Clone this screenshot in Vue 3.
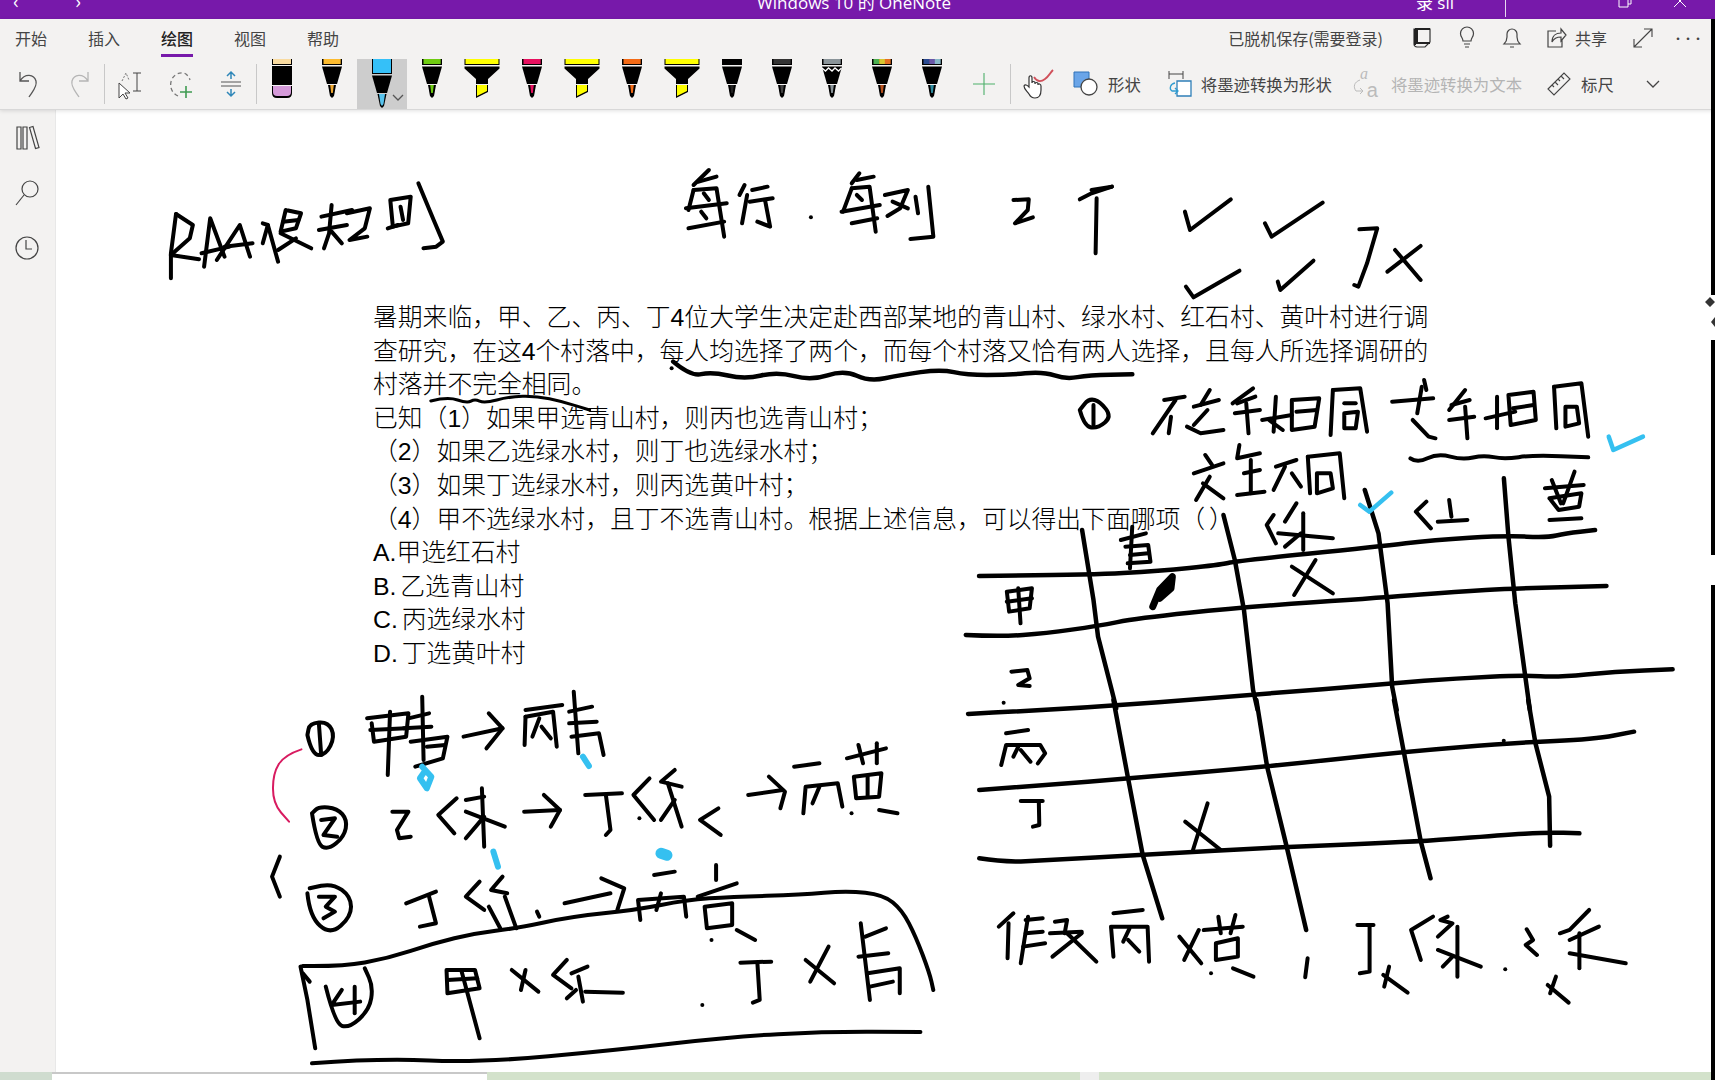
<template>
  <div class="window">
    <div class="titlebar">
      <div class="titlebar-inner">
        <span class="nav nav-back">‹</span>
        <span class="nav nav-forward">›</span>
        <span class="title">Windows 10 的 OneNote</span>
        <span class="account">录 sii</span>
        <span class="title-sep"></span>
        <svg class="win-btn restore" width="14" height="32" viewBox="0 0 14 32"><path d="M1 13h9v9H1zM4 13v-3h9v9h-3" fill="none" stroke="#fff" /></svg>
        <svg class="win-btn close" width="14" height="32" viewBox="0 0 14 32"><path d="M1 10l12 12M13 10L1 22" fill="none" stroke="#fff" /></svg>
      </div>
    </div>

    <header class="ribbon">
      <div class="tabs-row">
        <nav class="tabs">
          <span v-for="tab in tabs" :key="tab" :class="['tab', { active: tab === '绘图' }]">{{ tab }}</span>
        </nav>
        <div class="status">
          <span class="saved">已脱机保存(需要登录)</span>
          <svg class="st-icon" width="24" height="24" viewBox="0 0 24 24"><path d="M4 3h16v13l-5 5H7a3 3 0 0 1-3-3z" fill="none" stroke="#333" stroke-width="1.2" /><path d="M5 3v16M20 3H5M7 3v14h13" fill="none" stroke="#222" stroke-width="2" /></svg>
          <svg class="st-icon" width="24" height="24" viewBox="0 0 24 24"><path d="M8 15c0-3-2.500-4-2.500-7.500a6.500 6.500 0 0 1 13 0C18.500 11 16 12 16 15zM9 18h6M10 21h4" fill="none" stroke="#444" stroke-width="1.200" /></svg>
          <svg class="st-icon" width="24" height="24" viewBox="0 0 24 24"><path d="M4 18c2-2 3-3 3-7V8a5 5 0 0 1 10 0v3c0 4 1 5 3 7zM10 21h4" fill="none" stroke="#444" stroke-width="1.200" /></svg>
          <span class="share">
            <svg width="22" height="24" viewBox="0 0 22 24"><path d="M11 5H3v16h14v-7M7 16c0-6 4-9 9-9V3l5 6-5 6v-4c-4 0-7 1-9 5z" fill="none" stroke="#444" stroke-width="1.200" /></svg>
            共享
          </span>
          <svg class="st-icon expand" width="24" height="24" viewBox="0 0 24 24"><path d="M3 21L21 3M13 3h8v8M3 13v8h8" fill="none" stroke="#444" stroke-width="1.100" /></svg>
          <span class="more">•••</span>
        </div>
      </div>

      <div class="tools-row">
        <span class="tool tool-undo">
          <svg width="26" height="32" viewBox="0 0 26 32"><path d="M4 4v9h9M4 13c5-8 14-7 16 0 1.500 6-4 11-7 16" fill="none" stroke="#555" stroke-width="1.300" /></svg>
        </span>
        <span class="tool">
          <svg width="26" height="32" viewBox="0 0 26 32"><path d="M22 4v9h-9M22 13c-5-8-14-7-16 0-1.500 6 4 11 7 16" fill="none" stroke="#b5b5b5" stroke-width="1.300" /></svg>
        </span>
        <span class="divider"></span>
        <span class="tool tool-select">
          <svg width="30" height="32" viewBox="0 0 30 32"><path d="M4 15v15l4-4 3 5 2-1-3-5h5z" fill="#fff" stroke="#444" /><path d="M18 5h8M22 5v18M18 23h8" fill="none" stroke="#444" /><path d="M7 13l4-8 3 7" fill="none" stroke="#777" stroke-dasharray="2 1.500" /></svg>
        </span>
        <span class="tool">
          <svg width="30" height="32" viewBox="0 0 30 32"><path d="M12 28C5 25 3 17 6 11c2-4 7-7 12-6 3 1 5 4 6 7" fill="none" stroke="#777" stroke-width="1.300" stroke-dasharray="4 3" /><path d="M20 18v12M14 24h12" stroke="#3f9b52" stroke-width="1.600" /></svg>
        </span>
        <span class="tool tool-space">
          <svg width="26" height="32" viewBox="0 0 26 32"><path d="M3 14h20M3 18h20" stroke="#555" /><path d="M13 4v7M9 8l4-4 4 4M13 21v7M9 24l4 4 4-4" fill="none" stroke="#2e86b8" stroke-width="1.500" /></svg>
        </span>
        <span class="divider"></span>

        <span v-for="pen in pens" :key="pen.id" :class="['pen', { selected: pen.selected }]">
          <svg width="40" height="50" viewBox="-20 0 40 50">
            <template v-if="pen.kind === 'marker'">
              <rect x="-10" y="0" width="20" height="6" fill="#000" />
              <rect x="-9" y="0" width="18" height="5" :fill="pen.color" />
              <path d="M-10 7h20v19h-20z" fill="#000" />
              <path d="M-10 27h20v7q0 5-5 5h-10q-5 0-5-5z" fill="#000" />
              <path d="M-9 27h18v6q0 4-4 4h-10q-4 0-4-4z" :fill="pen.tip" />
            </template>
            <template v-else-if="pen.kind === 'wide'">
              <rect x="-17.500" y="0" width="35" height="6" fill="#000" />
              <rect x="-16.500" y="0" width="33" height="5" :fill="pen.color" />
              <path d="M-17.500 7.500h35v2L6 20v5H-6v-5L-17.500 9.500z" fill="#000" />
              <path d="M-6 26H6v7l-12 6z" fill="#000" />
              <path d="M-5 26H5v6l-10 5z" :fill="pen.color" />
            </template>
            <template v-else-if="pen.selected">
              <rect x="-10" y="0" width="20" height="15" fill="#000" />
              <rect x="-9" y="0" width="18" height="14" :fill="pen.color" />
              <path d="M-10 16.500H10L5 34H-5z" fill="#000" />
              <path d="M-4.500 35h9L2 47l-2 2-2-2z" fill="#000" />
              <path d="M-3 35H3L1.500 45 0 47l-1.500-2z" :fill="pen.tip" />
            </template>
            <template v-else>
              <rect x="-10" y="0" width="20" height="6" fill="#000" />
              <rect
                v-for="(band, i) in pen.bands"
                :key="i"
                :x="-8.500 + (17 * i) / pen.bands.length"
                y="0"
                :width="17 / pen.bands.length + 0.2"
                height="5"
                :fill="band"
              />
              <path d="M-10 7.500H10L5 25H-5z" fill="#000" />
              <path v-if="pen.zigzag" d="M-10 9l3.500 3 3-3 3.500 3 3-3 3.500 3 3-3" fill="none" stroke="#fff" stroke-width="1.300" />
              <path d="M-4 26H4l-2 11-2 2-2-2z" fill="#000" />
              <path d="M-1.800 26H1.800L.8 34H-.8z" :fill="pen.tip" />
            </template>
          </svg>
          <svg v-if="pen.selected" class="pen-caret" width="12" height="8" viewBox="0 0 12 8"><path d="M1 1l5 5 5-5" fill="none" stroke="#555" stroke-width="1.300" /></svg>
        </span>

        <span class="add-pen">
          <svg width="24" height="24" viewBox="0 0 24 24"><path d="M12 1v22M1 12h22" stroke="#4caf6a" stroke-width="1.100" /></svg>
        </span>
        <span class="divider"></span>

        <span class="tool tool-hand">
          <svg width="34" height="36" viewBox="0 0 34 36"><path d="M14 11c3 5 7 5 11 2s5-6 8-9" fill="none" stroke="#d0505a" stroke-width="1.800" /><path d="M9 28c-2-3-5-5-5-8 1-2 3-1 5 1V12c0-3 3-3 3 0v5c0-2 3-2 3 0v1c0-2 3-2 3 0v1c0-2 3-1 3 1v4c0 5-2 8-6 8s-5-2-6-4z" fill="#fff" stroke="#333" stroke-width="1.200" /></svg>
        </span>
        <span class="cmd shape-cmd">
          <svg width="26" height="26" viewBox="0 0 26 26"><path d="M1 1h15v15H1z" fill="#6aa5e8" stroke="#2f72b8" /><circle cx="16" cy="16" r="8" fill="#fff" stroke="#444" stroke-width="1.300" /></svg>
          形状
        </span>
        <span class="cmd convert-cmd">
          <svg width="26" height="28" viewBox="0 0 26 28"><path d="M2 1v8M2 4h14M16 1v8" fill="none" stroke="#444" /><path d="M10 11h14v15H10z" fill="#fff" stroke="#2f7fb8" stroke-width="1.300" /><path d="M8 13c-5 1-6 6-3 8h6M8 18l3 3-3 3" fill="none" stroke="#2f9bd0" stroke-width="1.300" /></svg>
          将墨迹转换为形状
        </span>
        <span class="cmd cmd-off text-cmd">
          <span class="aa">
            <i>a</i><b>a</b>
            <svg width="12" height="20" viewBox="0 0 12 20"><path d="M8 2C2 4 1 9 4 13h7M8 10l3 3-3 3" fill="none" stroke="#bbb" /></svg>
          </span>
          将墨迹转换为文本
        </span>
        <span class="cmd ruler-cmd">
          <svg width="26" height="26" viewBox="0 0 26 26"><path d="M2 18L18 2l6 6L8 24zM6 14l2 2M9 11l3 3M12 8l2 2M15 5l3 3" fill="none" stroke="#444" stroke-width="1.100" /></svg>
          标尺
        </span>
        <svg class="ribbon-chevron" width="14" height="10" viewBox="0 0 14 10"><path d="M1 2l6 6 6-6" fill="none" stroke="#444" stroke-width="1.300" /></svg>
      </div>
    </header>

    <main class="body">
      <aside class="sidebar">
        <svg width="26" height="28" viewBox="0 0 26 28"><path d="M3 3h4v22H3zM9 3h4v22H9zM15.500 3.500l3.500-1 6 21-3.500 1z" fill="none" stroke="#444" stroke-width="1.200" /></svg>
        <svg width="26" height="28" viewBox="0 0 26 28"><circle cx="16" cy="10" r="8" fill="none" stroke="#444" stroke-width="1.200" /><path d="M10 16L2 26" stroke="#444" stroke-width="1.200" /></svg>
        <svg width="26" height="28" viewBox="0 0 26 28"><circle cx="13" cy="14" r="11" fill="none" stroke="#444" stroke-width="1.200" /><path d="M12 6v9h6" fill="none" stroke="#444" stroke-width="1.200" /></svg>
      </aside>
      <section class="page">
        <p v-for="line in noteLines" :key="line" class="note-line">{{ line }}</p>
      </section>
    </main>

    <footer class="bottom-strip">
      <span class="strip-side"></span>
      <span class="strip-tab"></span>
      <span class="strip-green grow-a"></span>
      <span class="strip-gap"></span>
      <span class="strip-green grow-b"></span>
    </footer>

    <!-- handwritten ink sits over the page, on its own canvas -->
    <svg class="ink" width="1715" height="1080" viewBox="0 0 1715 1080">
      <g
        v-for="group in inkGroups"
        :key="group.id"
        :transform="`translate(${group.x} ${group.y}) scale(${group.sx} 0.3333)`"
        :stroke="group.color || '#000'"
        :stroke-width="group.width || 4"
        fill="none"
        stroke-linecap="round"
        stroke-linejoin="round"
      >
        <path v-for="(d, i) in group.paths" :key="i" :d="d" vector-effect="non-scaling-stroke" />
      </g>
      <path class="edge" d="M1713 19V295M1713 340V555M1713 585V1080" />
      <path d="M1705 302l5-5 5 5-5 5zM1711 322l4-5v10z" fill="#333" />
    </svg>
  </div>
</template>

<script setup>
const tabs = ['开始', '插入', '绘图', '视图', '帮助']

const pens = [
  { id: 1, kind: 'marker', color: '#f9dba0', tip: '#d59ad9' },
  { id: 2, kind: 'pen', bands: ['#fdbb2e'], tip: '#f0a830' },
  { id: 3, kind: 'pen', color: '#35c0f8', tip: '#58c4ee', selected: true },
  { id: 4, kind: 'pen', bands: ['#6ecb10'], tip: '#6ecb10' },
  { id: 5, kind: 'wide', color: '#ffff00' },
  { id: 6, kind: 'pen', bands: ['#e8105f'], tip: '#e8105f' },
  { id: 7, kind: 'wide', color: '#ffff00' },
  { id: 8, kind: 'pen', bands: ['#f46a15'], tip: '#f46a15' },
  { id: 9, kind: 'wide', color: '#ffff00' },
  { id: 10, kind: 'pen', bands: ['#000'], tip: '#222' },
  { id: 11, kind: 'pen', bands: ['#333'], tip: '#444' },
  { id: 12, kind: 'pen', bands: ['#8a9499'], tip: '#8a9499', zigzag: true },
  { id: 13, kind: 'pen', bands: ['#4caf50', '#d8c830', '#e67020'], tip: '#b8501c' },
  { id: 14, kind: 'pen', bands: ['#2a4a90', '#6a58a8', '#88b8c8'], tip: '#2e8ca0' },
]

const noteLines = [
  '暑期来临，甲、乙、丙、丁4位大学生决定赴西部某地的青山村、绿水村、红石村、黄叶村进行调',
  '查研究，在这4个村落中，每人均选择了两个，而每个村落又恰有两人选择，且每人所选择调研的',
  '村落并不完全相同。',
  '已知（1）如果甲选青山村，则丙也选青山村；',
  '（2）如果乙选绿水村，则丁也选绿水村；',
  '（3）如果丁选绿水村，则丙选黄叶村；',
  '（4）甲不选绿水村，且丁不选青山村。根据上述信息，可以得出下面哪项（ ）',
  'A.甲选红石村',
  'B. 乙选青山村',
  'C. 丙选绿水村',
  'D. 丁选黄叶村',
]

// "x,y x,y ..." to a stroke: short ones stay angular, long ones get smoothed
function stroke(points) {
  const pts = points.trim().split(/\s+/).map((p) => p.split(',').map(Number))
  if (pts.length === 1) return `M${pts[0]}L${pts[0]}`
  if (pts.length < 7) return 'M' + pts.join('L')
  let d = `M${pts[0]}`
  for (let i = 1; i < pts.length - 1; i++) {
    const mx = (pts[i][0] + pts[i + 1][0]) / 2
    const my = (pts[i][1] + pts[i + 1][1]) / 2
    d += `Q${pts[i]} ${mx},${my}`
  }
  return d + `L${pts[pts.length - 1]}`
}

function ink(id, x, y, sx, strokes, opts = {}) {
  return { id, x, y, sx, paths: strokes.map(stroke), ...opts }
}

const inkGroups = [
  // heading, top left
  ink('heading', 0, 110, 0.5102, [
    '345,312 335,430 335,505',
    '345,312 378,345 372,385 335,435 390,448',
    '400,470 412,325 440,440',
    '395,430 450,410',
    '425,450 470,345 490,440',
    '440,410 495,400',
    '525,345 545,455',
    '515,340 525,345 515,400',
    '560,300 590,310 580,355 550,365 560,300',
    '555,335 585,330',
    '550,370 610,415',
    '545,420 580,385',
    '630,320 690,300',
    '625,360 680,345',
    '650,285 645,370 635,415',
    '650,365 670,400',
    '680,310 725,295 715,355 685,390 720,380',
    '765,270 805,260 800,340 770,350 765,270',
    '785,290 790,330',
    '760,355 780,345',
    '820,220 850,330 868,395 855,410 830,415',
  ]),
  // top centre: 每行.每列 2个 and the ticks
  ink('count', 640, 140, 0.5102, [
    '135,90 105,135',
    '115,125 150,110',
    '105,150 95,210',
    '105,150 150,145 165,290',
    '90,205 170,190',
    '95,265 165,245',
    '125,160 135,180',
    '120,215 130,235',
    '205,135 195,165',
    '210,165 200,250',
    '220,150 250,140',
    '215,185 260,175',
    '245,180 255,260 230,245',
    '335,232',
    '430,100 415,130',
    '425,120 458,110',
    '415,145 398,215',
    '415,145 450,140 462,275',
    '395,215 470,195',
    '415,250 465,235',
    '425,165 435,180',
    '480,165 525,150 510,205 485,228',
    '495,185 525,205',
    '540,170 545,220',
    '565,140 575,290 530,297',
    '732,180 762,178 760,210 735,250 770,232',
    '925,140 885,160 862,178',
    '885,150 925,140',
    '895,175 893,340',
    '1068,215 1078,270 1158,178',
    '1225,250 1238,290 1338,188',
    '1070,440 1085,472 1175,392',
    '1250,425 1255,450 1320,362',
    '1410,268 1445,265 1425,370 1408,440 1400,435',
    '1465,395 1530,318',
    '1480,330 1530,420',
    '62,685',
  ]),
  ink('wave', 640, 140, 0.5102, [
    '65,665 100,710 140,695 205,718 270,695 335,722 400,690 450,725 510,705 590,688 640,705 720,705 790,695 835,718 880,705 965,703',
  ], { width: 4.500 }),
  ink('underline', 360, 295, 0.3827, [
    '185,318 230,305 280,325 300,312 325,325 390,305 460,303 530,320 600,345',
  ], { width: 3 }),
  // right: the three cases and table header
  ink('cases', 1000, 370, 0.456, [
    '175,120 185,170 215,175 245,140 220,95 195,85 175,120 175,120',
    '205,105 205,170',
    '360,90 405,80',
    '385,90 335,190',
    '375,140 370,190',
    '460,60 440,105',
    '425,110 480,90',
    '410,170 440,190 490,180',
    '455,120 425,165',
    '555,55 510,100',
    '520,100 560,80',
    '515,130 570,120',
    '540,100 545,190',
    '575,150 640,135',
    '605,80 600,185',
    '590,150 620,180',
    '640,90 700,85 690,170 640,180 640,90',
    '650,125 695,120',
    '730,60 725,195',
    '730,60 790,55 805,185',
    '755,100 780,100',
    '755,130 785,125 780,175 755,175 755,130',
    '930,30 935,60',
    '860,95 950,85',
    '925,50 915,130',
    '905,150 940,200 955,205',
    '1020,60 985,120',
    '990,105 1030,90',
    '985,150 1040,140',
    '1020,110 1025,205',
    '1065,145 1130,125',
    '1090,80 1090,175',
    '1115,75 1170,65 1175,150 1120,165 1115,75',
    '1125,115 1170,105',
    '1215,50 1220,175',
    '1215,50 1275,40 1290,200',
    '1240,110 1240,170 1270,160 1265,110 1240,110',
    '900,265 915,280 960,250 1015,270 1060,255 1105,268 1170,255 1290,262',
    '450,255 465,285',
    '425,310 490,280',
    '460,320 430,390',
    '445,340 490,385',
    '525,225 520,265 570,250',
    '535,310 570,300',
    '550,270 550,370',
    '520,375 580,365',
    '605,290 650,270',
    '625,290 600,360',
    '640,310 660,350',
    '675,260 680,370',
    '675,260 745,250 755,385',
    '695,310 695,370 730,355 725,310 695,310',
    // table headers and row labels
    '290,470 285,595',
    '265,510 320,490',
    '275,530 325,525 330,575 280,580',
    '285,555 325,550',
    '600,435 585,465 605,520',
    '650,400 625,455',
    '665,430 665,540',
    '610,490 730,505',
    '660,490 625,530',
    '935,395 912,425 945,475',
    '985,390 990,440',
    '960,455 1025,450',
    '1195,355 1280,345',
    '1210,330 1230,400',
    '1260,305 1235,400',
    '1205,385 1275,370 1270,410 1225,420 1205,385',
    '1205,450 1275,445',
    '15,665 70,655 65,715 20,725 15,665',
    '15,695 70,685',
    '40,655 45,760',
    '640,590 730,670',
    '692,570 645,675',
    '25,905 60,900 65,925 40,945 65,948',
    '8,998',
  ]),
  ink('smudge', 1000, 370, 0.456, ['335,710 350,660 378,620 375,655 350,685'], { width: 7 }),
  // table lines, upper part
  ink('table-top', 1000, 370, 0.456, [
    '180,480 205,690 215,800 245,960 255,1015',
    '490,435 515,570 535,720 555,960 565,1020',
    '800,360 830,490 850,700 860,950 870,1020',
    '1105,325 1115,500 1130,700 1150,900 1162,1020',
    '-46,618 190,615 350,603 480,585 520,573 830,530 950,510 1110,497 1200,503 1240,490 1305,480',
    '-75,795 0,800 100,790 215,768 300,745 530,712 845,682 1000,665 1130,655 1330,648',
    '-70,1032 140,1018 555,975 860,940 1000,925 1150,915 1220,922 1350,905 1475,898',
  ], { width: 4.500 }),
  ink('check-a', 1000, 370, 0.456, ['1335,200 1345,240 1410,200', '790,405 810,425 858,368'], { color: '#35c0f0', width: 4.500 }),
  // table lines, lower part and the hypothesis below
  ink('table-low', 950, 700, 0.4879, [
    '335,0 365,235 395,465 435,655',
    '628,0 650,200 690,440 730,690',
    '910,0 930,155 965,425 985,535',
    '1185,0 1200,130 1228,290 1230,437',
    '60,270 200,255 365,235 650,200 930,155 1160,128 1320,118 1402,95',
    '60,475 110,487 200,480 395,465 690,440 965,425 1130,405 1225,397 1290,400',
  ], { width: 4.500 }),
  ink('hypothesis', 950, 700, 0.4879, [
    '115,100 160,90',
    '105,195 115,135 185,135 195,160 180,190',
    '140,140 130,170',
    '145,150 165,185',
    '145,303 190,303',
    '182,303 183,375 170,380',
    '528,310 498,450',
    '482,365 555,450',
    '1135,122',
    '130,640 100,680',
    '120,670 118,775',
    '160,650 145,790',
    '155,660 190,655',
    '155,700 190,695',
    '150,740 195,730',
    '215,665 240,660 235,700',
    '205,700 270,695',
    '240,700 300,785',
    '270,700 210,770',
    '335,640 395,630',
    '335,770 330,680 405,680 408,785',
    '368,685 355,725',
    '365,720 388,755',
    '510,690 480,780',
    '470,710 515,790',
    '550,650 555,700',
    '520,690 600,680',
    '585,645 575,700',
    '545,730 590,715 590,770 545,780 545,730',
    '535,820',
    '580,805 622,830',
    '733,775 728,832',
    '835,675 868,675',
    '860,680 860,815 840,820',
    '900,800 890,860',
    '888,825 938,878',
    '990,650 945,690 965,780',
    '1020,650 1005,660 1030,670 1000,710',
    '1040,680 1040,830',
    '1000,750 1088,800',
    '1030,770 1010,800',
    '1138,808',
    '1182,688 1195,720 1180,735 1203,765',
    '1310,630 1270,690 1250,700',
    '1290,700 1290,805',
    '1330,680 1270,720',
    '1270,760 1385,790',
    '1242,830 1230,880',
    '1225,855 1268,908',
  ]),
  // bottom left: the four conditions
  ink('conditions', 250, 680, 0.4592, [
    '125,165 135,225 165,225 185,170 170,125 130,130 125,165',
    '150,130 155,225',
    '265,130 270,185 340,170 345,100 255,115',
    '262,150 340,145',
    '305,95 300,285',
    '345,115 390,100',
    '335,145 395,140',
    '375,50 378,240',
    '350,185 430,170 420,235 360,260',
    '385,200 425,195',
    '465,170 550,145',
    '520,100 550,145 515,205',
    '600,90 680,75',
    '598,195 600,110',
    '600,110 660,95 668,200',
    '630,115 615,170',
    '635,140 655,175',
    '705,35 715,220',
    '695,95 745,80',
    '695,130 755,125',
    '700,170 760,160 770,225',
    '135,400 145,490 170,510 205,470 212,420 190,385 150,380 135,400',
    '155,420 185,415 160,465 190,470',
    '310,395 345,395 320,450 325,475 350,470',
    '450,355 410,405 445,460',
    '470,360 510,350',
    '505,325 510,500',
    '470,395 555,440',
    '510,410 470,475',
    '597,395 675,390',
    '640,345 675,390 655,440',
    '730,345 810,340',
    '775,345 785,450 775,465',
    '870,295 835,345 880,420',
    '925,270 895,305 940,320',
    '910,310 940,440',
    '895,420 925,360',
    '1020,385 980,420 1025,465',
    '848,415',
    '1085,345 1160,330',
    '1130,290 1165,335 1155,385',
    '1185,260 1240,250',
    '1205,400 1210,320 1280,310 1290,380',
    '1240,320 1225,370',
    '1300,235 1385,205',
    '1325,195 1335,250',
    '1365,190 1365,250',
    '1315,290 1375,280 1370,350 1320,355 1315,290',
    '1345,290 1345,350',
    '1310,400',
    '1370,390 1410,400',
    '65,530 48,590 65,650',
    '125,640 130,710 175,765 220,710 220,650 180,610 130,625',
    '150,650 185,650 165,680 185,695 160,715',
    '340,670 405,635',
    '390,650 405,730 370,740',
    '500,605 470,650 510,690',
    '550,590 525,630 560,640',
    '520,680 545,745',
    '555,650 580,745',
    '625,695 630,710',
    '685,670 785,640',
    '765,595 815,625 800,690',
    '880,585 925,575',
    '850,720 845,660 945,650 950,710',
    '895,640 885,690',
    '1015,555 1015,600',
    '975,650 1060,610',
    '990,680 1050,670 1050,735 995,745 990,680',
    '1005,780',
    '1060,750 1100,780',
    '115,858 200,860 300,835 400,790 490,760 580,745 700,710 840,690 950,660 1050,650 1200,645 1300,632 1380,645 1420,690 1450,770 1480,880 1488,930',
    '110,860 125,960 142,1105',
    '115,880 130,905',
    '135,1150 280,1135 500,1148 800,1110 1050,1070 1250,1055 1460,1056',
    '165,920 185,1030 215,1045 260,990 268,920 250,865 250,865',
    '200,930 178,975 240,965',
    '228,920 228,1000',
    '428,870 430,940 500,925 490,870 428,870',
    '430,900 495,895',
    '460,870 500,1075',
    '600,870 590,930',
    '570,870 628,935',
    '690,840 660,885 700,925',
    '735,860 700,880',
    '715,890 725,965',
    '690,955 710,930',
    '730,935 812,938',
    '985,975',
    '1068,848 1135,845',
    '1105,850 1110,960 1095,968',
    '1260,800 1220,905',
    '1210,840 1272,910',
    '1330,730 1350,960',
    '1340,770 1385,745',
    '1325,830 1390,820',
    '1345,880 1415,865 1415,940',
    '1350,920 1400,905',
  ]),
  ink('bracket', 250, 680, 0.4592, ['112,208 75,225 50,280 50,370 85,425 85,425 85,425'], { color: '#d81b60', width: 2 }),
  ink('drops', 250, 680, 0.4592, [
    '375,260 395,290 385,325 370,295 380,275',
    '725,230 738,258',
    '530,515 540,560',
  ], { color: '#35c0f0', width: 6 }),
  ink('blob', 250, 680, 0.4592, ['895,520 908,526'], { color: '#35c0f0', width: 11 }),
]
</script>

<style scoped>
.window {
  position: relative;
  display: flex;
  flex-direction: column;
  width: 1715px;
  height: 1080px;
  overflow: hidden;
  background: #fff;
  font-family: "Noto Sans CJK SC", "Open Sans", sans-serif;
}

.titlebar {
  flex: none;
  height: 19px;
  overflow: hidden;
  background: #7719aa;
  color: #fff;
  font-size: 17px;
}

.titlebar-inner {
  display: flex;
  align-items: center;
  height: 32px;
  margin-top: -15px;
}

.nav {
  font-size: 20px;
  line-height: 1;
}

.nav-back {
  margin-left: 13px;
}

.nav-forward {
  margin-left: 56px;
}

.title {
  margin-left: 676px;
  font-family: "Open Sans", "Noto Sans CJK SC", sans-serif;
}

.account {
  margin-left: 465px;
  font-family: "Open Sans", "Noto Sans CJK SC", sans-serif;
}

.title-sep {
  width: 1px;
  height: 32px;
  margin-left: 51px;
  background: #e8d8f0;
}

.win-btn.restore {
  margin-left: 112px;
}

.win-btn.close {
  margin-left: 41px;
}

.ribbon {
  flex: none;
  height: 90px;
  background: #f3f2f1;
  border-bottom: 1px solid #d8d8d8;
  box-shadow: 0 1px 4px rgba(0, 0, 0, 0.12);
  position: relative;
  z-index: 1;
}

.tabs-row {
  display: flex;
  align-items: flex-start;
  justify-content: space-between;
  height: 40px;
}

.tabs {
  display: flex;
  gap: 41px;
  padding: 6px 0 0 15px;
}

.tab {
  height: 29px;
  font-size: 16px;
  line-height: 26px;
  color: #444;
}

.tab.active {
  color: #222;
  font-weight: 500;
  border-bottom: 3px solid #7719aa;
}

.status {
  display: flex;
  align-items: center;
  height: 38px;
  color: #444;
  font-size: 16px;
  padding-right: 12px;
}

.saved {
  margin-right: 27px;
}

.st-icon {
  margin-right: 21px;
}

.share {
  display: flex;
  align-items: center;
  gap: 8px;
  margin-right: 24px;
}

.st-icon.expand {
  margin-right: 18px;
}

.more {
  font-size: 10px;
  font-weight: 700;
  letter-spacing: 0;
}

.tools-row {
  display: flex;
  align-items: stretch;
  height: 50px;
  font-size: 16.4px;
  color: #444;
}

.tool {
  display: flex;
  align-items: center;
  justify-content: center;
  width: 51px;
  height: 50px;
}

.tool-undo {
  width: 49px;
  margin-left: 4px;
}

.tool-select,
.tool-space {
  width: 50px;
}

.divider {
  flex: none;
  width: 1px;
  height: 40px;
  margin-top: 5px;
  background: #c8c8c8;
}

.pen {
  position: relative;
  display: flex;
  justify-content: center;
  flex: none;
  width: 50px;
  overflow: hidden;
}

.pen.selected {
  background: #cdcdcd;
}

.pen-caret {
  position: absolute;
  right: 3px;
  bottom: 7px;
}

.add-pen {
  display: flex;
  align-items: center;
  justify-content: center;
  width: 53px;
}

.tool-hand {
  width: 52px;
}

.cmd {
  display: flex;
  align-items: center;
  white-space: nowrap;
}

.shape-cmd {
  gap: 9px;
  margin-left: 10px;
}

.convert-cmd {
  gap: 8px;
  margin-left: 26px;
}

.text-cmd {
  gap: 15px;
  margin-left: 22px;
}

.cmd-off {
  color: #b4b4b4;
}

.aa {
  position: relative;
  display: inline-block;
  width: 22px;
  height: 26px;
  font-family: "Liberation Serif", serif;
  color: #bbb;
}

.aa i {
  position: absolute;
  left: 6px;
  top: -6px;
  font-size: 16px;
}

.aa b {
  position: absolute;
  right: -2px;
  bottom: -5px;
  font-size: 20px;
  font-weight: 400;
  font-family: "Liberation Sans", sans-serif;
}

.aa svg {
  position: absolute;
  left: -2px;
  top: 7px;
}

.ruler-cmd {
  gap: 9px;
  margin-left: 24px;
}

.ribbon-chevron {
  align-self: center;
  margin-left: 32px;
}

.body {
  flex: 1;
  display: flex;
  min-height: 0;
}

.sidebar {
  flex: none;
  display: flex;
  flex-direction: column;
  align-items: center;
  gap: 27px;
  width: 56px;
  padding: 14px 2px 0 0;
  box-sizing: border-box;
  background: #f3f2f1;
  border-right: 1px solid #e8e8e8;
}

.page {
  flex: 1;
  padding: 191px 0 0 317px;
  background: #fff;
}

.note-line {
  margin: 0;
  height: 33.6px;
  font-family: "Liberation Sans", "Noto Sans CJK SC", sans-serif;
  font-size: 24.8px;
  font-weight: 300;
  line-height: 33.6px;
  word-spacing: -3px;
  color: #000;
  white-space: pre;
}

.bottom-strip {
  flex: none;
  display: flex;
  height: 8px;
  background: #d3e2cb;
}

.strip-side {
  width: 52px;
  background: #cfdccf;
}

.strip-tab {
  width: 435px;
  background: #fff;
  border-top: 2px solid #c8c8c8;
  box-sizing: border-box;
}

.strip-green {
  background: #d3e2cb;
}

.grow-a {
  width: 593px;
}

.strip-gap {
  width: 19px;
  background: #eeeeee;
}

.grow-b {
  flex: 1;
}

.ink {
  position: absolute;
  top: 0;
  left: 0;
  z-index: 2;
  pointer-events: none;
}

.edge {
  fill: none;
  stroke: #000;
  stroke-width: 4;
}
</style>
